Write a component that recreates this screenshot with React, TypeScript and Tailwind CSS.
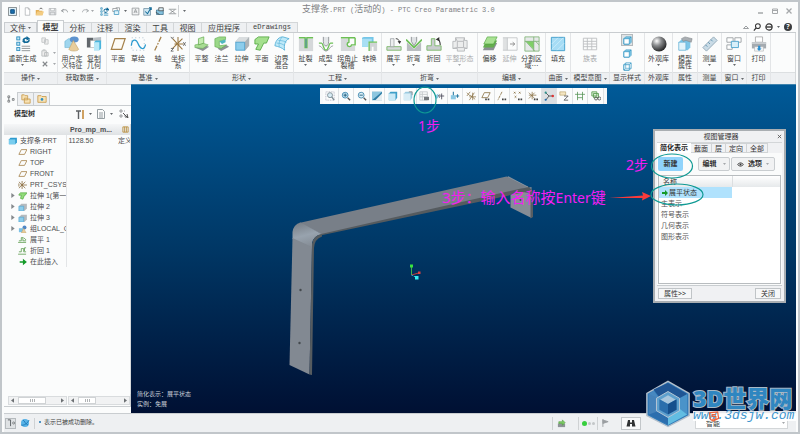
import React from "react";

type Kids = { children?: React.ReactNode };

function Svg({ box = "0 0 18 18", className = "h-4 w-4", children }: Kids & { box?: string; className?: string }) {
  return (
    <svg viewBox={box} className={"shrink-0 " + className} fill="none" aria-hidden="true">
      {children}
    </svg>
  );
}

function Caret({ muted = false }: { muted?: boolean }) {
  return (
    <svg viewBox="0 0 6 4" className="h-[2px] w-[3px] shrink-0" aria-hidden="true">
      <path d="M0 0h6L3 4z" fill={muted ? "#a5a8ab" : "#666a6e"} />
    </svg>
  );
}

/* ---------- ribbon icons ---------- */
const regen = (
  <Svg>
    <g stroke="#2f8fc0" fill="#bfe5f5">
      <rect x="2" y="1" width="3.4" height="3.4" />
      <rect x="2" y="7" width="3.4" height="3.4" />
      <rect x="2" y="13" width="3.4" height="3.4" />
    </g>
    <path d="M7.5 11.5H17M7.5 14H17M7.5 16.500H17" stroke="#8b8f92" />
    <path d="M9 5c1-3 4-3 5-2M16 4c0 3-4 4-6 2" stroke="#126a98" strokeWidth="1.800" />
    <path d="M13 0l4 3-4 2zM11 3.500v5L8 6z" fill="#126a98" />
  </Svg>
);
const userFeature = (
  <Svg>
    <path d="M1 6l4-3h9l-3 3v7H1z" fill="#9fd6ee" stroke="#62aed0" strokeWidth=".6" />
    <ellipse cx="11.500" cy="4" rx="5" ry="3.400" fill="#5e93cf" />
    <path d="M10.500 5L5.500 15c1 2.500 10 2.500 11 0z" fill="#e8cd9b" stroke="#b99a62" strokeWidth=".6" />
  </Svg>
);
const copyGeom = (
  <Svg>
    <path d="M1 2h7v4H5v7H1z" fill="#62676c" />
    <path d="M8 2l9-1v5H8z" fill="#b9bfc4" />
    <path d="M5 5h7v8H5z" fill="#fff" stroke="#999" strokeWidth=".6" />
    <path d="M9 7l2-2h6v9l-2 2H9z" fill="#49b4dc" />
    <path d="M9 7h6v9H9z" fill="#b8e8f8" />
  </Svg>
);
const plane = (
  <Svg>
    <path d="M5.500 3H17l-4 12H1.500z" stroke="#a5814a" strokeWidth="1.400" fill="#fdfbf6" />
  </Svg>
);
const sketch = (
  <Svg>
    <path d="M2 2h14v14H2z" stroke="#9fb4c4" strokeDasharray="1 3" />
    <path d="M1.500 11C2 3 7 3 9 8.500s7 9 8.500 1" stroke="#2b9bd0" strokeWidth="1.400" />
  </Svg>
);
const axis = (
  <Svg>
    <path d="M12.500 1L5 17" stroke="#a5814a" strokeWidth="1.400" strokeDasharray="6 1.500 2 1.500" />
  </Svg>
);
const csys = (
  <Svg>
    <path d="M9 1v16M3 3l11 12M14 3L3 14M5 9h10" stroke="#9a7740" strokeWidth="1.200" />
    <path d="M15 7l2.500 4M17.500 7L15 11M1 1l1.500 2L4 1M1 14h3l-3 3h3" stroke="#555" strokeWidth=".9" />
  </Svg>
);
const flatWall = (
  <Svg>
    <path d="M1 13l10-3 6 2-7 5z" fill="#8d9296" />
    <path d="M1 10l9-2 6 2-6 4-9-1z" fill="#a8db94" stroke="#5ea84b" strokeWidth=".6" />
    <path d="M5 3l6-2v7l-6 2z" fill="#c4ecb2" stroke="#5ea84b" strokeWidth=".8" />
  </Svg>
);
const flange = (
  <Svg>
    <path d="M4 14l10-4 3 2-9 5z" fill="#8d9296" />
    <path d="M1 3l5-2h7v3L6 6v5l8-1-6 4-7-2z" fill="#9bd889" stroke="#5ea84b" strokeWidth=".7" />
    <path d="M6 6l7-2v3L9 9z" fill="#4fb7c0" />
  </Svg>
);
const extrude = (
  <Svg>
    <path d="M1 7l5-6h11v10l-5 6z" fill="#c5cacd" />
    <path d="M1 7l5-6h11l-5 6z" fill="#d9dddf" />
    <path d="M12 7l5-6v10l-5 6z" fill="#aeb4b8" />
    <path d="M2 7h10v9H2z" fill="#8ccdec" stroke="#4fa3cf" />
  </Svg>
);
const planar = (
  <Svg>
    <path d="M1 4l4-3h12l-3 7h-3l-4 8-5-1 3-6H1z" fill="#a4e08e" stroke="#4da33b" strokeWidth=".9" />
  </Svg>
);
const blend = (
  <Svg>
    <path d="M1 11C2 4 6 1 10 1l7 2c-5 2-6 8-5 13-3-3-7-4-11-5z" fill="#bfe9f8" stroke="#57b1d8" />
    <path d="M5 5c4 0 7 1 9 2M3 8c4 0 7 1 9 3M9 1C6 5 5 9 6 12" stroke="#57b1d8" strokeWidth=".7" />
  </Svg>
);
const rip = (
  <Svg>
    <path d="M1 3h16v14H1z" fill="#d5d8da" />
    <path d="M1 2h7v11h2V2h7" stroke="#6cbf55" strokeWidth="1.600" />
    <path d="M9 3v10" stroke="#3d7fa8" />
  </Svg>
);
const form = (
  <Svg>
    <path d="M1 8h3c2 0 2 8 5 8s3-8 5-8h3" stroke="#6cbf55" strokeWidth="1.600" />
    <path d="M1 11c4 0 4 6 8 6s4-6 8-6" stroke="#9a9ea2" />
    <path d="M6 1v5c0 7 6 7 6 0V1" fill="#e3e6e8" stroke="#8b8f93" />
  </Svg>
);
const relief = (
  <Svg>
    <path d="M1 3h8v8h8v6H1z" fill="#d5d8da" />
    <path d="M1 2h16M17 2v8h-4a2.500 2.500 0 1 1-3-3V2" stroke="#6cbf55" strokeWidth="1.600" />
  </Svg>
);
const convert = (
  <Svg>
    <path d="M0 2l2-1h11v6H7v5H0z" fill="#74c6e8" />
    <path d="M0 3h11v4H7v5H0z" fill="#a8dff4" />
    <path d="M8 17V8h9v9h-4v-5h-2v5z" fill="#d0d4d6" />
    <path d="M8 17V7h9" stroke="#6cbf55" strokeWidth="1.400" />
  </Svg>
);
const unbend = (
  <Svg>
    <path d="M1 12h16v4H1z" fill="#d5d8da" stroke="#7ab868" />
    <path d="M5 3h4v9H5z" fill="#eceeef" stroke="#9a9ea2" strokeWidth=".8" />
    <path d="M11 3c2 0 4 1 4 4" stroke="#333" />
    <path d="M13 6l4-.5-1.500 3.500z" fill="#333" />
  </Svg>
);
const bend = (
  <Svg>
    <path d="M1 7l8 8 8-8v10H1z" fill="#b9bdc0" />
    <path d="M0 4l9 9 9-9" stroke="#6cbf55" strokeWidth="2" />
    <path d="M6 1v5l3 5 3-5V1" fill="#dfe2e4" stroke="#8b8f93" />
  </Svg>
);
const bendBack = (
  <Svg>
    <path d="M1 11h5V3h4v8h7v5H1z" fill="#c9cdcf" stroke="#7ab868" />
    <path d="M12 4c3-1 4 3 4 6" stroke="#333" strokeWidth="1.200" />
    <path d="M11 4l4-3v5z" fill="#333" />
  </Svg>
);
const flatPattern = (
  <Svg>
    <path d="M4 2h10v3h3v9h-3v3H6v-3H1V6h3z" fill="#eceded" stroke="#b4b7b9" />
    <path d="M6 6h7v7H6zM4 2l2 4M14 2l-1 4M1 14l5-1M17 14l-4-1" stroke="#b4b7b9" />
  </Svg>
);
const offset = (
  <Svg>
    <path d="M5 8h12l-4 8H1z" fill="#8b9094" />
    <path d="M5 5h12l-4 8H1z" fill="#63ad4e" />
    <path d="M6 1h11l-4 8H2z" fill="#a9e293" stroke="#4da33b" strokeWidth=".7" />
  </Svg>
);
const extend = (
  <Svg>
    <path d="M1 2h5v14H1z" fill="#dfe1e2" />
    <path d="M1 2h16v14H1M6 2v14" stroke="#c4c7c9" />
    <path d="M9 9h5M12 7l2.500 2-2.500 2" stroke="#888" />
  </Svg>
);
const splitArea = (
  <Svg>
    <path d="M1 1h16v16H1z" fill="#e7e9ea" />
    <path d="M2 6h9v9z" fill="#7fcf66" />
    <path d="M1 1h16v16H1zM11 1v16M1 6h16M2 6l10 11M13 6l4 4" stroke="#79b070" strokeWidth=".9" />
  </Svg>
);
const fill = (
  <Svg>
    <path d="M1.500 1.500h15v15h-15z" fill="#a6dcf5" stroke="#3c9ccb" />
    <path d="M2 9l7-7M2 15L15 2M8 16l8-8" stroke="#c9ecfa" />
  </Svg>
);
const famTable = (
  <Svg>
    <path d="M1.500 2.500h15v13h-15zM1.500 6h15M1.500 9h15M1.500 12h15M6 2.500v13M11 2.500v13" stroke="#bcbfc1" />
  </Svg>
);
const sphere = (
  <Svg>
    <defs>
      <radialGradient id="ball" cx=".35" cy=".3" r=".75">
        <stop offset="0" stopColor="#fff" />
        <stop offset=".4" stopColor="#8d8f91" />
        <stop offset="1" stopColor="#1c1d1e" />
      </radialGradient>
    </defs>
    <circle cx="9" cy="9" r="8.500" fill="url(#ball)" />
  </Svg>
);
const modelProps = (
  <Svg>
    <path d="M2 7l3-3h10v9l-3 3H2z" fill="#7cc6e8" />
    <path d="M2 7h8v9H2z" fill="#e3f4fb" stroke="#67b2d6" strokeWidth=".8" />
    <path d="M5 3l4-2 8 2-1 4-6-2-3 1z" fill="#a9aeb2" stroke="#7b8084" strokeWidth=".6" />
  </Svg>
);
const ruler = (
  <Svg>
    <path d="M1 13L13 1l4 4L5 17z" fill="#c9dbe6" stroke="#8fa6b5" />
    <path d="M4 10l2 2M7 7l2 2M10 4l2 2" stroke="#5a8fad" />
  </Svg>
);
const windows = (
  <Svg>
    <path d="M1 2h7v5H1zM10 2h7v5h-7zM1 10h6v5H1z" fill="#fff" stroke="#9b9fa2" />
    <path d="M6 6h8v7H6z" fill="#d7eff9" stroke="#4aa3cc" />
  </Svg>
);
const printer = (
  <Svg>
    <path d="M5 1h8v6H5z" fill="#fff" stroke="#999" strokeWidth=".8" />
    <path d="M1 7h16v7H1z" fill="#a5abb0" />
    <path d="M1 7h16v2H1z" fill="#c9cdd0" />
    <path d="M4 12h10v5H4z" fill="#f5f6f7" stroke="#a8abae" strokeWidth=".6" />
    <path d="M8 11h2.500v3H12l-3 3-2.500-3H8z" fill="#2b8fd0" />
  </Svg>
);

type Tool = { icon: React.ReactNode; label: string[]; w: string; drop?: boolean; off?: boolean };

function ToolButton({ icon, label, w, drop, off }: Tool) {
  return (
    <button
      type="button"
      disabled={off}
      className={"flex h-full shrink-0 flex-col items-center pt-[3px] text-[7px] leading-[7px] whitespace-nowrap " + w + (off ? " text-[#a9abad]" : " text-[#3d3f41]")}
    >
      {icon}
      <span className="mt-[3px] flex flex-col items-center">
        {label.map((l) => (
          <span key={l}>{l}</span>
        ))}
      </span>
      {drop && (
        <span className="mt-[2px]">
          <Caret muted={off} />
        </span>
      )}
    </button>
  );
}

function Group({ name, w, drop, children }: Kids & { name: string; w: string; drop?: boolean }) {
  return (
    <section aria-label={name} className={"flex shrink-0 flex-col border-r border-[#e3e5e7] " + w}>
      <div className="flex h-10 items-stretch justify-center">{children}</div>
      <div className="flex h-3 items-center justify-center gap-[2px] border-t border-[#dcdfe1] bg-[#eef0f2] text-[7px] whitespace-nowrap text-[#3d3f41]">
        {name}
        {drop && <Caret />}
      </div>
    </section>
  );
}

const groups: { name: string; w: string; drop?: boolean; tools: Tool[] }[] = [
  { name: "获取数据", w: "w-[49px]", drop: true, tools: [
    { icon: userFeature, label: ["用户定", "义特征"], w: "w-6" },
    { icon: copyGeom, label: ["复制", "几何"], w: "w-5" },
  ] },
  { name: "基准", w: "w-[83px]", drop: true, tools: [
    { icon: plane, label: ["平面"], w: "w-5" },
    { icon: sketch, label: ["草绘"], w: "w-5" },
    { icon: axis, label: ["轴"], w: "w-5" },
    { icon: csys, label: ["坐标", "系"], w: "w-5" },
  ] },
  { name: "形状", w: "w-[104px]", drop: true, tools: [
    { icon: flatWall, label: ["平整"], w: "w-5" },
    { icon: flange, label: ["法兰"], w: "w-5" },
    { icon: extrude, label: ["拉伸"], w: "w-5" },
    { icon: planar, label: ["平面"], w: "w-5" },
    { icon: blend, label: ["边界", "混合"], w: "w-5" },
  ] },
  { name: "工程", w: "w-[88px]", drop: true, tools: [
    { icon: rip, label: ["扯裂"], w: "w-5", drop: true },
    { icon: form, label: ["成型"], w: "w-5", drop: true },
    { icon: relief, label: ["拐角止", "裂槽"], w: "w-6" },
    { icon: convert, label: ["转换"], w: "w-5" },
  ] },
  { name: "折弯", w: "w-24", drop: true, tools: [
    { icon: unbend, label: ["展平"], w: "w-5", drop: true },
    { icon: bend, label: ["折弯"], w: "w-5", drop: true },
    { icon: bendBack, label: ["折回"], w: "w-5" },
    { icon: flatPattern, label: ["平整形态"], w: "w-8", drop: true, off: true },
  ] },
  { name: "编辑", w: "w-[68px]", drop: true, tools: [
    { icon: offset, label: ["偏移"], w: "w-5" },
    { icon: extend, label: ["延伸"], w: "w-5", off: true },
    { icon: splitArea, label: ["分割区", "域⋯"], w: "w-6" },
  ] },
  { name: "曲面", w: "w-[25px]", drop: true, tools: [{ icon: fill, label: ["填充"], w: "w-5" }] },
  { name: "模型意图", w: "w-[39px]", drop: true, tools: [{ icon: famTable, label: ["族表"], w: "w-5", off: true }] },
];

const lateGroups: { name: string; w: string; drop?: boolean; tools: Tool[] }[] = [
  { name: "外观库", w: "w-7", tools: [{ icon: sphere, label: ["外观库"], w: "w-6", drop: true }] },
  { name: "属性", w: "w-[25px]", tools: [{ icon: modelProps, label: ["模型", "属性"], w: "w-5" }] },
  { name: "测量", w: "w-6", tools: [{ icon: ruler, label: ["测量"], w: "w-5", drop: true }] },
  { name: "窗口", w: "w-[25px]", drop: true, tools: [{ icon: windows, label: ["窗口"], w: "w-5", drop: true }] },
  { name: "打印", w: "w-6", tools: [{ icon: printer, label: ["打印"], w: "w-5" }] },
];

function Cube({ wire = false }: { wire?: boolean }) {
  return (
    <Svg box="0 0 10 10" className="h-[9px] w-[9px]">
      <path d="M1 3l2-2h6v6L7 9H1z" fill={wire ? "#fff" : "#8fd0ea"} stroke="#3a9bc6" strokeWidth=".9" />
      <path d="M1 3h6v6H1zM7 3l2-2" fill="#fff" stroke="#3a9bc6" strokeWidth=".9" />
      {wire && <path d="M3 1v6h6M1 9l2-2" stroke="#3a9bc6" strokeWidth=".7" />}
    </Svg>
  );
}

function Ribbon() {
  return (
    <div className="flex h-[52px] shrink-0 overflow-hidden border-t border-[#c9cdd0] bg-[#fbfcfc]">
      <Group name="操作" w="w-[54px]" drop>
        <ToolButton icon={regen} label={["重新生成"]} w="w-9" drop />
        <div className="flex w-4 flex-col justify-between py-1">
          <button type="button" aria-label="复制" className="flex items-center">
            <Svg box="0 0 9 9" className="h-2 w-2"><path d="M1 1h4v5H1zM4 3h4v5H4z" fill="#eee" stroke="#c2c5c7" /></Svg>
          </button>
          <button type="button" aria-label="粘贴" className="flex items-center gap-1">
            <Svg box="0 0 9 9" className="h-2 w-2"><path d="M1 2h5v6H1zM4 4h4v4H4zM2 1h3" fill="#eee" stroke="#b9bcbe" /></Svg>
            <Caret muted />
          </button>
          <button type="button" aria-label="删除" className="flex items-center gap-1">
            <Svg box="0 0 9 9" className="h-2 w-2"><path d="M2 2l5 5M7 2L2 7" stroke="#85898c" strokeWidth="1.300" /></Svg>
            <Caret muted />
          </button>
        </div>
      </Group>
      {groups.map((g) => (
        <Group key={g.name} name={g.name} w={g.w} drop={g.drop}>
          {g.tools.map((t) => <ToolButton key={t.label.join("")} {...t} />)}
        </Group>
      ))}
      <Group name="显示样式" w="w-[35px]">
        <div className="flex flex-col items-center gap-px pt-px">
          <button type="button" aria-label="着色" className="flex h-3 w-3 items-center justify-center border border-[#b5babd] bg-[#e0e4e6]"><Cube /></button>
          <button type="button" aria-label="消隐" className="flex h-3 w-3 items-center justify-center"><Cube /></button>
          <button type="button" aria-label="线框" className="flex h-3 w-3 items-center justify-center"><Cube wire /></button>
        </div>
      </Group>
      {lateGroups.map((g) => (
        <Group key={g.name} name={g.name} w={g.w} drop={g.drop}>
          {g.tools.map((t) => <ToolButton key={t.label.join("")} {...t} />)}
        </Group>
      ))}
      <div className="flex flex-1 flex-col border-r border-[#d5d8da]">
        <div className="h-10" />
        <div className="h-3 border-t border-[#dcdfe1] bg-[#eef0f2]" />
      </div>
    </div>
  );
}

/* ---------- title bar ---------- */
type QuickItem = { name: string; w: string; art: React.ReactNode };

const quick: QuickItem[] = [
  { name: "新建", w: "w-3", art: <path d="M3 1h4l2 2v8H3zM7 1v2h2" fill="#fff" stroke="#9b9fa2" strokeWidth=".8" /> },
  { name: "打开", w: "w-[13px]", art: <g><path d="M1 4h4l1 1h4v6H1z" fill="#e3ae55" /><path d="M3 6h9l-2 5H1z" fill="#f3cc82" /><path d="M6 3c1-2 3-2 4 0" stroke="#444" /></g> },
  { name: "保存", w: "w-3", art: <path d="M1.500 2h9v8.500h-9zM3.500 2v3h5V2M3 10.500V7h6v3.500" fill="#e4e6e8" stroke="#a6aaad" strokeWidth=".8" /> },
  { name: "撤消", w: "w-3", art: <path d="M2 5c3-2 8-2 8 2M2 5l3-2M2 5l3 2" stroke="#8f9396" strokeWidth="1.200" /> },
];
const quick2: QuickItem[] = [
  { name: "重新生成", w: "w-3", art: <g><path d="M1 1h2v2H1zM1 5h2v2H1zM1 9h2v2H1zM5 9h6M5 11h6" stroke="#3a93bd" /><path d="M5 5c1-3 4-3 6-1M10 6c-1 1-3 2-5 0M9 1l3 3H8" stroke="#126a98" strokeWidth="1.400" /></g> },
  { name: "窗口", w: "w-3", art: <g><path d="M1 2h6v4H1zM5 1h5v4" stroke="#8d9194" /><path d="M3 5h6v5H3z" fill="#e1f3fa" stroke="#3a93bd" /></g> },
];
const quick3: QuickItem[] = [
  { name: "注释", w: "w-3", art: <path d="M1.500 1.500h9v9h-9zM4 8l2-5 2 5M5 6.500h2" stroke="#8d9194" fill="#f1f2f3" /> },
  { name: "评审", w: "w-3", art: <g><path d="M1 2h9v9H1z" fill="#cfe7f2" stroke="#6f8ea0" /><path d="M3 6l3 3 4-7M8 1h3v3" stroke="#126a98" strokeWidth="1.400" /></g> },
  { name: "共享", w: "w-[13px]", art: <g><path d="M2 4h9v6H2z" fill="#83c1de" stroke="#3c6f8a" /><path d="M5 1h6v4H5zM1 7l5 3" fill="#d9eef7" stroke="#444" /></g> },
  { name: "关闭", w: "w-3", art: <path d="M1 3h10M1 9h10M3 4l6 4M9 4L3 8" stroke="#75797c" strokeWidth=".9" /> },
];

function Quick({ items }: { items: QuickItem[] }) {
  return (
    <>
      {items.map((q) => (
        <button key={q.name} type="button" aria-label={q.name} className={"flex items-center justify-center " + q.w}>
          <Svg box="0 0 12 12" className="h-[9px] w-[9px]">{q.art}</Svg>
        </button>
      ))}
    </>
  );
}

function TitleBar() {
  return (
    <header className="flex h-[18px] shrink-0 items-center pr-0.5 pl-[4px]">
      <div className="flex h-3 w-[294px] shrink-0 items-center">
        <Svg box="0 0 10 10" className="h-[9px] w-[9px]">
          <path d="M.5 .5h9v9h-9z" fill="#dff0f8" stroke="#7d8286" />
          <path d="M3 3h4v4H3z" fill="#1a6fae" stroke="#0c4a7c" />
        </Svg>
        <span className="mr-px ml-[2px] h-3 w-px bg-[#cfd2d4]" />
        <Quick items={quick} />
        <span className="mr-1 ml-[2px]"><Caret muted /></span>
        <button type="button" aria-label="重做" className="flex w-3 justify-center">
          <Svg box="0 0 12 12" className="h-[9px] w-[9px]"><path d="M10 5c-3-2-8-2-8 2M10 5L7 3M10 5L7 7" stroke="#a2a6a9" strokeWidth="1.200" /></Svg>
        </button>
        <span className="mr-1"><Caret muted /></span>
        <Quick items={quick2} />
        <span className="mx-[2px]"><Caret /></span>
        <Quick items={quick3} />
        <span className="mr-1 h-3 w-px bg-[#cfd2d4]" />
        <Caret />
      </div>
      <h1 className="flex-1 font-['Liberation_Mono','Noto_Sans_CJK_SC',monospace] text-[7px] whitespace-pre text-[#7f8284]">
        <span className="text-[9px]">支撑条</span>.PRT (<span className="text-[9px]">活动的</span>) - PTC Creo Parametric 3.0
      </h1>
      <div className="flex gap-2 pr-0.5">
        <button type="button" aria-label="最小化"><Svg box="0 0 6 6" className="h-[6px] w-[6px]"><path d="M0 5h5" stroke="#a5a8aa" strokeWidth="1.500" /></Svg></button>
        <button type="button" aria-label="还原"><Svg box="0 0 6 6" className="h-[6px] w-[6px]"><path d="M.5 1h5v4.500h-5zM.5 2.500h5" stroke="#a5a8aa" /></Svg></button>
        <button type="button" aria-label="关闭窗口"><Svg box="0 0 6 6" className="h-[6px] w-[6px]"><path d="M.5 .5l5 5M5.500 .5l-5 5" stroke="#a5a8aa" strokeWidth="1.300" /></Svg></button>
      </div>
    </header>
  );
}

const tabs = [
  { t: "分析", w: "w-7" },
  { t: "注释", w: "w-[27px]" },
  { t: "渲染", w: "w-7" },
  { t: "工具", w: "w-[27px]" },
  { t: "视图", w: "w-7" },
  { t: "应用程序", w: "w-[45px]" },
];

function TabRow() {
  return (
    <nav className="flex h-3 shrink-0 items-end text-[8px] leading-[10px] text-[#3d3f41]">
      <button type="button" className="flex h-[10px] w-[33px] items-center justify-center gap-[2px] border border-b-0 border-[#c9cdd0] bg-[#eef0f2]">文件<Caret /></button>
      <button type="button" className="h-3 w-[27px] border border-b-0 border-[#c9cdd0] bg-[#fbfcfc] font-bold">模型</button>
      {tabs.map((x) => (
        <button key={x.t} type="button" className={"h-[10px] border-t border-r border-[#d3d6d8] bg-[#eef0f2] leading-[9px] " + x.w}>{x.t}</button>
      ))}
      <button type="button" className="h-[10px] w-[51px] border-t border-r border-[#d3d6d8] bg-[#eef0f2] font-['Liberation_Mono',monospace] text-[7px] leading-[9px]">eDrawings</button>
      <div className="flex flex-1 items-center justify-end gap-1 pr-1 pb-px">
        <button type="button" aria-label="折叠功能区"><Svg box="0 0 6 4" className="h-1 w-[6px]"><path d="M.5 3.500L3 1l2.500 2.500z" stroke="#85898c" strokeWidth=".8" /></Svg></button>
        <button type="button" aria-label="搜索"><Svg box="0 0 9 9" className="h-2 w-2"><circle cx="5.500" cy="3.500" r="2.700" stroke="#333" strokeWidth="1.200" /><path d="M3.500 5.500L1 8.500" stroke="#333" strokeWidth="1.400" /></Svg></button>
        <button type="button" aria-label="资源"><Svg box="0 0 9 9" className="h-2 w-2"><circle cx="4.500" cy="4.500" r="3.500" stroke="#333" strokeWidth="1.300" /><path d="M1 4.500h7" stroke="#333" strokeWidth="1.500" /></Svg></button>
        <Caret />
        <button type="button" aria-label="帮助" className="flex h-2 w-2 items-center justify-center rounded-full bg-[#3a3c3e] text-[7px] leading-[8px] font-bold text-white">?</button>
      </div>
    </nav>
  );
}

/* ---------- model tree ---------- */
const treePlane = <path d="M4 2h7L8 8H1z" stroke="#a5814a" />;
const treeExtrude = <g><path d="M1 4l3-3h7v6L8 10z" fill="#b5babe" /><path d="M1 4h6v6H1z" fill="#8ccdec" stroke="#4fa3cf" strokeWidth=".8" /></g>;
const tree: { label: string; art: React.ReactNode; pad: string; arrow?: boolean; v?: string; s?: string }[] = [
  { label: "支撑条.PRT", pad: "pl-1", v: "1128.50", s: "定义", art: <g><path d="M1 3l2-2h8v6L9 9H1z" fill="#2d9ace" /><path d="M1 3h8v6H1z" fill="#79cdee" /></g> },
  { label: "RIGHT", pad: "pl-[14px]", art: treePlane },
  { label: "TOP", pad: "pl-[14px]", art: treePlane },
  { label: "FRONT", pad: "pl-[14px]", art: treePlane },
  { label: "PRT_CSYS", pad: "pl-[14px]", art: <path d="M5 0v10M1 1l8 8M9 1L1 9M3 5h8M1 3v4" stroke="#8a6d3f" /> },
  { label: "拉伸 1(第一", pad: "pl-[7px]", arrow: true, art: <path d="M1 3l2-2h8L9 4H8l-2 5-3-1 1-4H1z" fill="#92dc7b" stroke="#4da33b" strokeWidth=".8" /> },
  { label: "拉伸 2", pad: "pl-[7px]", arrow: true, art: treeExtrude },
  { label: "拉伸 3", pad: "pl-[7px]", arrow: true, art: treeExtrude },
  { label: "组LOCAL_G", pad: "pl-[7px]", arrow: true, art: <g><path d="M1 4h6v5H1z" fill="#7cc1e6" /><circle cx="8" cy="3" r="2.500" fill="#4e86c6" /><path d="M7 4l3 6H4z" fill="#e8cd9b" stroke="#b99a62" strokeWidth=".5" /></g> },
  { label: "展平 1", pad: "pl-[14px]", art: <path d="M0 8h10M1 6h3V2h2v4h4M7 2l3 3" stroke="#5b9a4b" /> },
  { label: "折回 1", pad: "pl-[14px]", art: <path d="M0 9h10M1 6h3V2h3v4h3M8 5V1h2" stroke="#5b9a4b" /> },
  { label: "在此插入", pad: "pl-[14px]", art: <path d="M2 4h4V1l5 4-5 4V6H2z" fill="#149a28" /> },
];

function Scroller({ w, thumb }: { w: string; thumb: string }) {
  return (
    <div className={"flex h-[9px] items-center justify-between border border-[#d9dcde] bg-[#f1f2f3] px-[2px] " + w}>
      <Svg box="0 0 4 6" className="mr-1 h-[5px] w-[3px]"><path d="M4 0v6L0 3z" fill="#6d7174" /></Svg>
      <span className={"flex h-[7px] items-center justify-center gap-px border border-[#d0d3d5] bg-white " + thumb}>
        <i className="h-[3px] w-px bg-[#b0b3b5]" /><i className="h-[3px] w-px bg-[#b0b3b5]" /><i className="h-[3px] w-px bg-[#b0b3b5]" />
      </span>
      <span className="flex-1" />
      <Svg box="0 0 4 6" className="h-[5px] w-[3px]"><path d="M0 0v6l4-3z" fill="#6d7174" /></Svg>
    </div>
  );
}

function TreePanel() {
  return (
    <aside className="flex w-[127px] shrink-0 flex-col overflow-hidden border-t border-[#cfd2d4] bg-[#fbfcfc] pt-[7px] pb-[6px]">
      <div className="flex h-[14px] shrink-0 border-b border-[#c9cdd0]">
        <button type="button" aria-label="模型树" className="flex h-[14px] w-[14px] items-center justify-center border-r border-[#c9cdd0] bg-[#fbfcfc]">
          <Svg box="0 0 9 9" className="h-2 w-2"><path d="M1 1h2v2H1zM1 6h2v2H1zM6 4h2v2H6zM2 3v3" stroke="#6d7174" strokeWidth=".9" /></Svg>
        </button>
        <button type="button" aria-label="文件夹浏览器" className="flex w-4 items-center justify-center border-t border-r border-[#c9cdd0] bg-[#eef0f2]">
          <Svg box="0 0 12 12" className="h-[10px] w-[10px]"><path d="M1 1h3l1 1h3v5H1zM4 5h3l1 1h3v5H4z" fill="#f7e2b5" stroke="#c99b4c" /></Svg>
        </button>
        <button type="button" aria-label="收藏夹" className="flex w-4 items-center justify-center border-t border-r border-[#c9cdd0] bg-[#eef0f2]">
          <Svg box="0 0 12 12" className="h-[10px] w-[10px]"><path d="M1 2h4l1 1h5v7H1z" fill="#f7e2b5" stroke="#c99b4c" /><circle cx="6" cy="6.500" r="1.600" fill="#2d8fc4" /></Svg>
        </button>
      </div>
      <div className="flex h-[18px] shrink-0 items-center pb-[2px] pl-[10px] text-[#2d2f31]">
        <h2 className="flex-1 text-[7px] font-bold">模型树</h2>
        <button type="button" aria-label="设置" className="mr-1 flex items-center gap-1">
          <Svg box="0 0 10 10" className="h-[10px] w-[10px]"><path d="M1 2h5M3.500 2v8" stroke="#5d6063" strokeWidth="1.400" /><path d="M8 1v9" stroke="#c58a3a" strokeWidth="1.600" /></Svg>
          <Caret />
        </button>
        <button type="button" aria-label="显示" className="mr-[6px] flex items-center gap-1">
          <Svg box="0 0 10 10" className="h-[10px] w-[10px]"><path d="M1.500 .5h5l2 2v7h-7zM3 4h4M3 6h4M3 8h4" stroke="#8a9499" strokeWidth=".9" /></Svg>
          <Caret />
        </button>
        <button type="button" aria-label="查找" className="mr-[2px]">
          <Svg box="0 0 10 10" className="h-[10px] w-[10px]"><path d="M1 1h2v2H1zM1 6h2v2H1zM5 2h1M5 7h1" stroke="#85898c" strokeWidth=".8" /><path d="M4 4l5 5M8 5l1 4M6 8h3" stroke="#555" /></Svg>
        </button>
      </div>
      <div className="flex-1 overflow-hidden border-r border-[#d5d8da]">
        <table className="w-full table-fixed border-collapse font-['Liberation_Sans','Noto_Sans_CJK_SC',sans-serif] text-[7px] leading-[10px] text-[#4b4d4f]">
          <colgroup><col className="w-[62px]" /><col className="w-[52px]" /><col /></colgroup>
          <thead>
            <tr className="h-[11px] bg-linear-to-b from-[#f6f7f8] to-[#dfe2e4] text-left">
              <th className="p-0" aria-label="名称" />
              <th className="p-0 pl-[4px] font-bold">Pro_mp_m...</th>
              <th className="p-0" aria-label="状态"><Svg box="0 0 8 8" className="ml-1 h-[7px] w-[7px]"><path d="M1 1h6v6H1zM3 1v6M5 1v6" stroke="#b98f3e" /></Svg></th>
            </tr>
          </thead>
          <tbody>
            {tree.map((r) => (
              <tr key={r.label} className="h-[11px]">
                <td className="overflow-hidden border-r border-[#e3e5e7] p-0">
                  <div className={"flex items-center whitespace-nowrap " + r.pad}>
                    {r.arrow && <Svg box="0 0 4 6" className="mr-[3px] h-[5px] w-1"><path d="M0 0v6l4-3z" fill="#85898c" /></Svg>}
                    <Svg box="0 0 11 10" className="mr-[3px] h-2 w-[9px]">{r.art}</Svg>
                    {r.label}
                  </div>
                </td>
                <td className="p-0 pl-[2px]">{r.v}</td>
                <td className="overflow-hidden p-0 whitespace-nowrap">{r.s}</td>
              </tr>
            ))}
          </tbody>
        </table>
      </div>
      <div className="flex h-[13px] shrink-0 items-end gap-px border-r border-b border-[#c9cdd0] pb-px pl-1">
        <Scroller w="w-[59px]" thumb="w-7" />
        <Scroller w="flex-1" thumb="w-[18px]" />
      </div>
    </aside>
  );
}

/* ---------- graphics area ---------- */
const glyph = "#8b7447";
const viewTools: { name: string; art: React.ReactNode }[] = [
  { name: "重新调整", art: <g><path d="M1 1h10v10H1z" stroke="#aab" strokeDasharray="1 1" /><circle cx="6" cy="5" r="3" fill="#d8ecf5" stroke="#7a8a92" /><path d="M8 7l3 4" stroke="#7a8a92" strokeWidth="1.500" /></g> },
  { name: "放大", art: <g><circle cx="5" cy="5" r="3.500" fill="#bfe3f3" stroke="#3c86ac" /><path d="M3 5h4M5 3v4" stroke="#174f6e" /><path d="M8 8l3 3" stroke="#555" strokeWidth="1.600" /></g> },
  { name: "缩小", art: <g><circle cx="5" cy="5" r="3.500" fill="#d8eef7" stroke="#3c86ac" /><path d="M3 5h4" stroke="#174f6e" /><path d="M8 8l3 3" stroke="#555" strokeWidth="1.600" /></g> },
  { name: "重画", art: <g><path d="M0 1h12v10H0z" fill="#2e7da5" /><path d="M0 1h12L0 11z" fill="#8cc6df" /><path d="M12 3v8H4z" fill="#e6eef1" /></g> },
  { name: "显示样式", art: <g><path d="M1 3l2-2h8v7l-2 3H1z" fill="#3f9fc8" /><path d="M1 3h8v8H1z" fill="#c9e9f6" /></g> },
  { name: "已保存方向", art: <g><path d="M1 3l2-2h8v7l-2 3H1z" fill="#9ccbe0" /><path d="M1 3h8v8H1z" fill="#d8edf6" /><path d="M7 1h4v4" stroke="#888" /></g> },
  { name: "视图管理器", art: <g><path d="M1 1h9v10H1zM1 4h9M1 7h9M4 1v10" stroke="#c3c7c9" /><path d="M6 7h6v4H6z" fill="#777b7e" /></g> },
  { name: "旋转中心", art: <g><path d="M1 5l3-2v5l-3 2z" fill="#8cc9e4" /><path d="M5 6h6M8 3v7M6 4l-2 2 2 2" stroke="#445" /></g> },
  { name: "透视", art: <g><path d="M1 5h6v5H1z" fill="#8cc9e4" /><path d="M4 1v4M7 6h4M9 4v4" stroke="#2c7ba2" strokeWidth="1.300" /></g> },
  { name: "基准显示", art: <path d="M1 2l4 4M5 1L1 6M4 11l6-9M5 5l6 5M8 2v9M4 7h8" stroke={glyph} strokeWidth=".9" /> },
  { name: "平面显示", art: <g><path d="M4 2h7L8 8H1z" stroke={glyph} /><path d="M5 10h6" stroke="#444" strokeWidth="2" strokeDasharray="2 1" /></g> },
  { name: "轴显示", art: <g><path d="M6 1L1 11" stroke={glyph} strokeDasharray="4 1" /><path d="M6 10h5" stroke="#444" strokeWidth="2" strokeDasharray="2 1" /></g> },
  { name: "点显示", art: <g><path d="M1 1l2 2M3 1L1 3M7 1l2 2M9 1L7 3M2 6l2 2M4 6L2 8" stroke={glyph} /><path d="M6 10h5" stroke="#444" strokeWidth="2" strokeDasharray="2 1" /></g> },
  { name: "坐标系显示", art: <g><path d="M5 1v9M1 2l7 7M8 2L1 9M1 5h9" stroke={glyph} strokeWidth=".9" /><path d="M7 10h5" stroke="#444" strokeWidth="2" strokeDasharray="2 1" /></g> },
  { name: "旋转", art: <g><path d="M2 2l4 4h5M6 6l-4 5" stroke="#5d6265" strokeWidth="1.200" /><circle cx="10.500" cy="6" r="1.500" fill="#d33" /><circle cx="2" cy="2" r="1.300" fill="#2a8f8a" /><circle cx="2" cy="10.500" r="1.300" fill="#256fae" /></g> },
  { name: "注释显示", art: <g><path d="M1 1h7v4H1z" fill="#f4e6c3" stroke="#b49a5d" strokeWidth=".7" /><path d="M6 6h5l-5 5h5" stroke="#555" /></g> },
  { name: "尺寸显示", art: <path d="M3 1v10M9 1v10M0 4h12M3 8h6" stroke="#4f8f4f" strokeWidth=".9" /> },
  { name: "图层", art: <g><path d="M1 1h6v5H1zM3 3h6v5H3z" fill="#d6efd0" stroke="#5a9a52" /><circle cx="6" cy="9" r="1.800" stroke="#555" /><circle cx="10" cy="9" r="1.800" stroke="#555" /></g> },
];

function ViewToolbar() {
  return (
    <div className="relative mx-auto mt-[3px] w-[287px]">
      <div className="flex h-4 bg-[#f7f8f9] px-[3px]">
        {viewTools.map((t) => (
          <button
            key={t.name}
            type="button"
            aria-label={t.name}
            className={"flex flex-1 items-center justify-center border-r border-[#dfe2e4] " + (t.name === "旋转" ? "bg-[#dcdfe2]" : "bg-[#fbfcfc]")}
          >
            <Svg box="0 0 12 12" className="h-[10px] w-[10px]">{t.art}</Svg>
          </button>
        ))}
      </div>
      <svg viewBox="0 0 24 28" className="absolute -top-[2px] left-[93px] h-7 w-6" fill="none" aria-hidden="true">
        <ellipse cx="12" cy="14" rx="11" ry="13" stroke="#0f9a94" strokeWidth="1.200" />
      </svg>
      <p className="absolute top-[29px] left-[98px] text-[14px] leading-[18px] whitespace-nowrap text-[#f41cf4]">1步</p>
    </div>
  );
}

function Bracket() {
  return (
    <svg viewBox="286 170 254 210" className="absolute top-[85px] left-[155px] h-[210px] w-[254px]" fill="none" aria-hidden="true">
      <defs>
        <linearGradient id="corner" x1=".3" y1="0" x2=".6" y2="1">
          <stop offset="0" stopColor="#7a8189" />
          <stop offset=".5" stopColor="#98a3ae" />
          <stop offset="1" stopColor="#828992" />
        </linearGradient>
      </defs>
      <path d="M510.500 192l21-5v31l-21-10.500z" fill="#868d96" />
      <path d="M527 187q6 1 6 7v23l-2.500 1.500V195q0-5-4-6z" fill="#575d62" />
      <path d="M318 236l202-43q7-2 11 2l.5-2q-1-5-4-7L320 232z" fill="#555b5f" />
      <path d="M299 223l207.500-46.500 2.500.5 19 10q-3 1-7 1.500L321 234z" fill="#787f88" />
      <path d="M292.500 239v-7q1-7.500 8-9.500l21 11.500q-8 2-9.500 9v5z" fill="url(#corner)" />
      <path d="M292.500 238l19.500 9-2.500 127.500L289.500 365z" fill="#828992" />
      <path d="M309.500 374.500l2.500.5 2-127q.500-9 8-11.500v-2.500q-9 1.500-10 10z" fill="#555b5f" />
      <path d="M508 176.500l20 10.500" stroke="#a8aeb5" strokeWidth=".6" />
      <circle cx="300.500" cy="290" r="1.200" fill="#44494e" />
      <circle cx="299.500" cy="343" r="1.200" fill="#44494e" />
      <circle cx="520.500" cy="200" r="1" fill="#44494e" />
      <path d="M411.500 275v-9" stroke="#3fb24a" />
      <path d="M411.500 275l7-2" stroke="#c23a3a" />
      <path d="M411.500 275l6 3" stroke="#2fc4d4" strokeDasharray="1.500 1" />
      <path d="M410 264.500h3v3h-3z" fill="#39e33f" />
      <path d="M418 271.500h2.500v2.500H418z" fill="#e04343" />
      <path d="M415 276h3.500v3.500H415z" fill="#35eef5" />
    </svg>
  );
}

const reps = ["主表示", "符号表示", "几何表示", "图形表示"];

function ViewManager() {
  return (
    <div className="absolute top-[44px] right-[10px] w-[133px]">
      <section aria-label="视图管理器" className="flex h-[174px] flex-col border-2 border-[#a9aeb2] bg-[#f0f1f3] px-[2px] text-[7px] leading-[10px] text-[#333]">
        <div className="flex h-[11px] shrink-0 items-center">
          <h2 className="flex-1 pl-2 text-center text-[7px]">视图管理器</h2>
          <button type="button" aria-label="关闭对话框"><Svg box="0 0 6 6" className="h-[5px] w-[5px]"><path d="M1 1l4 4M5 1L1 5" stroke="#555" /></Svg></button>
        </div>
        <div className="flex h-[11px] shrink-0 items-end border-t border-[#d3d6d8]">
          <button type="button" className="h-[10px] w-[34px] bg-white font-bold text-[#222]">简化表示</button>
          <button type="button" className="h-[10px] w-[21px] border border-l-0 border-[#d0d3d5] leading-[9px]">截面</button>
          <button type="button" className="h-[10px] w-[14px] border border-l-0 border-[#d0d3d5] leading-[9px]">层</button>
          <button type="button" className="h-[10px] w-[21px] border border-l-0 border-[#d0d3d5] leading-[9px]">定向</button>
          <button type="button" className="h-[10px] w-[21px] border border-l-0 border-[#d0d3d5] leading-[9px]">全部</button>
        </div>
        <div className="flex flex-1 flex-col bg-[#fafbfb] px-px">
          <div className="flex h-[22px] shrink-0 items-center">
            <button type="button" className="h-[14px] w-[25px] rounded-[2px] bg-[#90d3fb] font-bold">新建</button>
            <button type="button" className="ml-[15px] flex h-[14px] w-8 items-center justify-center gap-[6px] rounded-[2px] border border-[#c9cdd0] bg-[#f1f2f3] font-bold">编辑<Caret muted /></button>
            <button type="button" className="ml-px flex h-[14px] w-11 items-center justify-center gap-1 rounded-[2px] border border-[#c9cdd0] bg-[#f1f2f3] font-bold">
              <Svg box="0 0 8 6" className="h-[5px] w-[7px]"><path d="M.5 3Q4-1 7.500 3 4 7 .5 3z" stroke="#333" /><circle cx="4" cy="3" r="1.200" fill="#333" /></Svg>
              选项<Caret muted />
            </button>
          </div>
          <div className="h-[109px] border border-[#b8bcbf] bg-white">
            <table className="w-full table-fixed border-collapse">
              <colgroup><col className="w-[73px]" /><col /></colgroup>
              <thead>
                <tr className="h-[11px] bg-linear-to-b from-white to-[#e6e9eb] text-left">
                  <th className="border-r border-[#dcdfe1] p-0 pl-1 font-normal">名称</th>
                  <th className="p-0" aria-label="状态" />
                </tr>
              </thead>
              <tbody>
                <tr className="h-[11px]">
                  <td className="bg-[#b0e2fd] p-0 pl-[3px]">
                    <span className="flex items-center gap-px">
                      <Svg box="0 0 6 6" className="h-[6px] w-[6px]"><path d="M0 2h3V0l3 3-3 3V4H0z" fill="#149a28" /></Svg>展平状态
                    </span>
                  </td>
                  <td className="p-0" />
                </tr>
                {reps.map((r) => (
                  <tr key={r} className="h-[11px]"><td className="p-0 pl-[2px] text-[#555]">{r}</td><td className="p-0" /></tr>
                ))}
              </tbody>
            </table>
          </div>
        </div>
        <div className="flex h-4 shrink-0 items-center justify-between border-t border-[#c9cdd0] px-px">
          <button type="button" className="h-[11px] w-[34px] border border-[#c0c4c7] bg-[#f6f7f8] leading-[9px]">属性&gt;&gt;</button>
          <button type="button" className="h-[11px] w-[26px] border border-[#c0c4c7] bg-[#f6f7f8] leading-[9px]">关闭</button>
        </div>
      </section>
      <svg viewBox="0 0 100 54" className="absolute top-[24px] -left-[45px] h-[54px] w-[100px]" fill="none" aria-hidden="true">
        <ellipse cx="64" cy="13" rx="20.500" ry="12" stroke="#0f9a94" strokeWidth="1.200" />
        <ellipse cx="69" cy="41.500" rx="26" ry="10.500" stroke="#0f9a94" strokeWidth="1.200" />
        <path d="M1 45l34-2.500-1-3.500 9 4-9 4.500.5-2.500z" fill="#fb3b3b" />
      </svg>
      <p className="absolute top-[27px] -left-[27px] text-[14px] leading-[18px] whitespace-nowrap text-[#f41cf4]">2步</p>
      <p className="absolute top-[59px] -left-[211px] text-[15px] leading-[18px] whitespace-nowrap text-[#f41cf4]">3步：输入名称按<span className="text-[14px]">Enter</span>键</p>
    </div>
  );
}

function Viewport() {
  return (
    <main className="relative min-w-0 flex-1 overflow-hidden border-t border-[#3f83ad] bg-linear-to-b from-[#005a98] via-[#003765] to-[#001033]">
      <Bracket />
      <ViewToolbar />
      <ViewManager />
      <div className="absolute bottom-[4px] left-[6px] text-[6px] leading-[10px] text-[#c9d0d8]">
        <p>简化表示：展平状态</p>
        <p>实例：免展</p>
      </div>
    </main>
  );
}

function StatusBar() {
  return (
    <footer className="flex h-[19px] shrink-0 items-center border-t border-[#c9cdd0] bg-[#eef0f2] text-[#3d3f41]">
      <button type="button" aria-label="导航器" className="ml-px flex h-[11px] w-[11px] items-center justify-center border border-[#b5babd] bg-[#dfe2e4]">
        <Svg box="0 0 9 9" className="h-2 w-2"><path d="M1 1h3v7" stroke="#54585b" /><circle cx="7.500" cy="4.500" r="1.200" stroke="#54585b" strokeWidth=".7" /></Svg>
      </button>
      <button type="button" aria-label="浏览器" className="ml-[3px] flex h-[11px] w-[11px] items-center justify-center">
        <Svg box="0 0 10 10" className="h-[10px] w-[10px]"><circle cx="5" cy="5" r="4" fill="#58b2e6" /><path d="M1 7c3 1 7-2 8-5M3 2c2 1 2 4 5 5" stroke="#1a78b8" strokeWidth=".9" /></Svg>
      </button>
      <span className="mx-1 h-[11px] w-px bg-[#cfd2d4]" />
      <p className="flex flex-1 items-center gap-[3px] pb-[3px] text-[6px] leading-[8px]">
        <i className="h-[2px] w-[2px] rounded-full bg-[#1c77b5]" />表示已被成功删除。
      </p>
      <div className="flex items-center pr-[8px]">
        <span className="mr-1 h-[13px] w-px bg-[#cfd2d4]" />
        <Svg box="0 0 10 10" className="h-[9px] w-[9px]"><path d="M1 5h8v4H1z" fill="#8d9397" /><path d="M2 3h4V1l3 3-3 3V5H2z" fill="#7ccc62" stroke="#4a9a3a" strokeWidth=".6" /></Svg>
        <span className="mr-[3px] ml-3 h-[13px] w-px bg-[#cfd2d4]" />
        <i className="h-[5px] w-[5px] rounded-full bg-[#37cf3e]" />
        <i className="ml-px h-[3px] w-[3px] rounded-full bg-[#c3c6c8]" />
        <i className="ml-px h-[3px] w-[3px] rounded-full bg-[#c3c6c8]" />
        <span className="mr-1 ml-[2px] h-[13px] w-px bg-[#cfd2d4]" />
        <Svg box="0 0 8 9" className="h-2 w-[7px]"><path d="M1 0v9M1 1l6 2-6 2z" fill="#9a9ea1" stroke="#9a9ea1" /></Svg>
        <button type="button" aria-label="查找" className="ml-3 flex h-[13px] w-5 items-center justify-center border border-[#c3c7ca] bg-[#f8f9fa]">
          <Svg box="0 0 10 8" className="h-2 w-[10px]"><path d="M2 1h2v2l1 1 1-1V1h2l1.500 6.500H6V5H4v2.500H.5z" fill="#2f3133" /></Svg>
        </button>
        <div className="relative ml-[54px]">
          <select aria-label="选择过滤器" className="block h-3 w-[93px] appearance-none border border-[#d3d6d8] bg-white pl-[10px] text-[7px] leading-[9px]">
            <option>智能</option>
          </select>
          <span className="absolute top-[5px] right-[3px] flex"><Caret muted /></span>
        </div>
      </div>
    </footer>
  );
}

function Watermark() {
  return (
    <div className="pointer-events-none absolute right-[2px] bottom-[4px] flex h-12 gap-[2px]">
      <svg viewBox="0 0 46 50" className="h-12 w-[46px] shrink-0" aria-hidden="true">
        <path d="M23 1.500l22 12.500v23L23 48.500 1 37V14z" fill="#2f79b8" stroke="#b4c0cc" strokeWidth="1.500" />
        <path d="M23 3l20 11.500-4 7-16-9-9 5.500-6-8z" fill="#1f5594" />
        <path d="M43 14.500V36l-8-5V19z" fill="#4a93c9" />
        <path d="M43 36L23 47l-9-6 21-11z" fill="#62bde2" />
        <path d="M3 14.500l11 4.500v13l9 7v8L3 36z" fill="#2c6eae" />
        <path d="M3 14.500L8 11l6 8v13l-11 4z" fill="#6ba0cd" opacity=".4" />
        <path d="M23 12l12 7v13l-12 7-12-7V19z" fill="#5d9fcd" stroke="#b9c8d5" />
        <path d="M23 16l8 4.500-8 4.500-8-4.500z" fill="#a9c6dd" />
        <path d="M14 20l9 5v11l-9-5z" fill="#2b6eac" />
        <path d="M32 20l-9 5v11l9-5z" fill="#164f8c" />
      </svg>
      <div className="flex w-[103px] flex-col pt-[5px]">
        <strong className="text-[23px] leading-[26px] font-black whitespace-nowrap text-[#2f86c0] [paint-order:stroke_fill] [-webkit-text-stroke:2px_#a9b9c6]">3D世界网</strong>
        <span className="relative flex h-[10px] items-center bg-white/90 font-['Liberation_Mono',monospace] text-[13px] leading-[10px] whitespace-nowrap text-[#3f97cf] italic">
          www.3dsjw.com
          <svg viewBox="0 0 12 12" className="absolute top-0 left-[15px] h-[11px] w-3" fill="none" aria-hidden="true">
            <path d="M1 2l9-1 1 7-6 3-3-2zM8 4H4v2h4v3H4" stroke="#ee6238" strokeWidth="1.300" />
          </svg>
        </span>
      </div>
    </div>
  );
}

export default function App() {
  return (
    <div className="relative flex min-h-screen w-full flex-col overflow-hidden border-2 border-[#c1c6ca] bg-[#fbfcfc] px-0.5 font-['Noto_Sans','Noto_Sans_CJK_SC',sans-serif]">
      <TitleBar />
      <TabRow />
      <Ribbon />
      <div className="flex min-h-[329px] flex-1">
        <TreePanel />
        <Viewport />
      </div>
      <StatusBar />
      <Watermark />
    </div>
  );
}
